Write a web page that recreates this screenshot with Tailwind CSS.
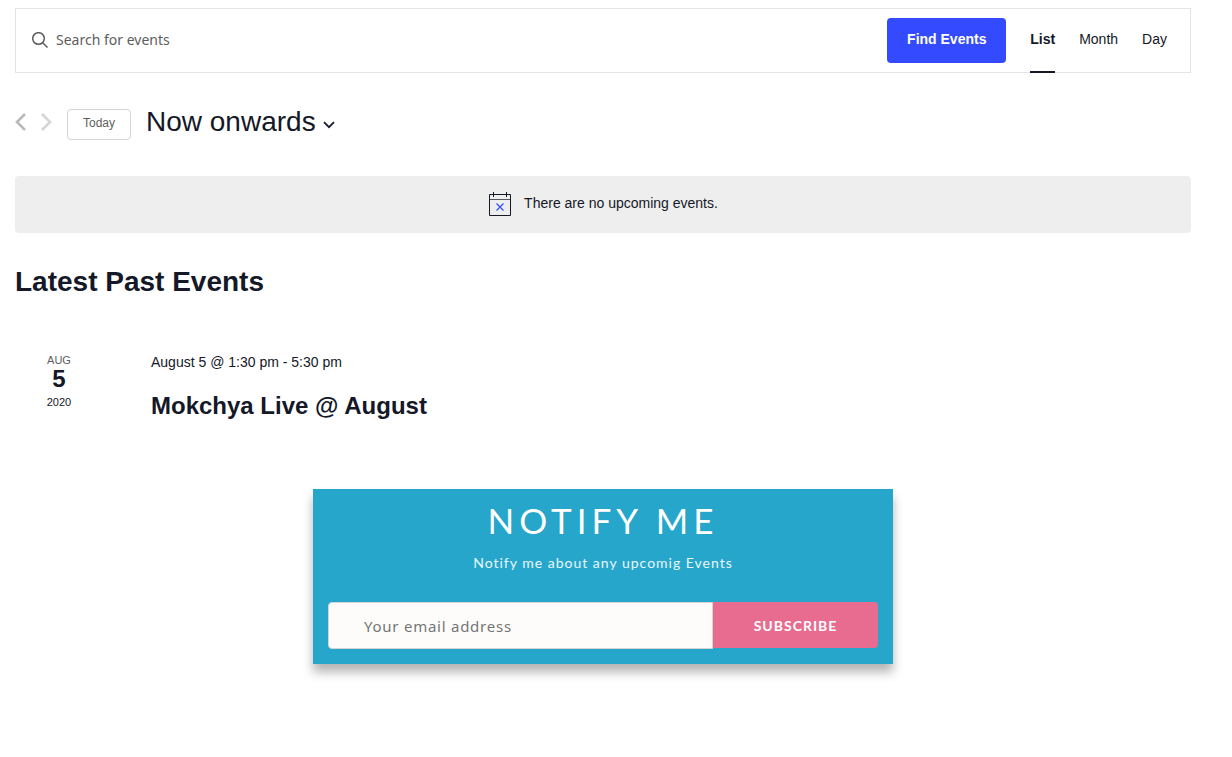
<!DOCTYPE html>
<html lang="en">
<head>
    <meta charset="UTF-8">
    <meta name="viewport" content="width=device-width, initial-scale=1.0">
    <title>Events</title>
    <script src="https://cdn.jsdelivr.net/npm/@tailwindcss/browser@4"></script>
</head>
<body class="bg-white text-[#141827] font-['Liberation_Sans',sans-serif]">
    <main class="pl-[15px] pr-[41px] pt-2 pb-10">

        <!-- Search bar and view switcher -->
        <header class="flex items-stretch border border-[#e4e4e4] h-[65px] pr-[23px]">
            <form class="flex flex-1 items-center pr-6" onsubmit="return false">
                <label for="search" class="pl-4 pr-2 pb-0.5" aria-label="Search for events">
                    <svg class="w-4 h-4" viewBox="0 0 16 16" fill="none" stroke="#5d5d5d" stroke-width="1.5">
                        <circle cx="6.5" cy="6.5" r="5.8"/>
                        <path d="M10.7 10.7L15.5 15.5"/>
                    </svg>
                </label>
                <input id="search" type="text" placeholder="Search for events" class="flex-1 min-w-0 h-11 pb-0.5 text-sm outline-none placeholder:text-[#5d5d5d] placeholder:opacity-100 font-['Noto_Sans',sans-serif]">
                <button type="submit" class="bg-[#334aff] text-white text-sm font-bold rounded h-[45px] w-[119px] pb-1">Find Events</button>
            </form>
            <nav class="flex gap-6 text-sm -mb-px">
                <a href="#" class="flex items-center pb-0.5 font-bold border-b-2 border-[#141827]">List</a>
                <a href="#" class="flex items-center pb-0.5 border-b-2 border-transparent">Month</a>
                <a href="#" class="flex items-center pb-0.5 border-b-2 border-transparent">Day</a>
            </nav>
        </header>

        <!-- Date navigation -->
        <div class="flex items-center mt-8 h-9">
            <button type="button" aria-label="Previous events" class="w-3 pb-0.5">
                <svg class="w-3 h-[18px]" viewBox="0 0 12 18" fill="none" stroke="#bababa" stroke-width="2.6">
                    <path d="M10 1L2 9l8 8"/>
                </svg>
            </button>
            <button type="button" aria-label="Next events" class="w-3 ml-[13px] pb-0.5" disabled>
                <svg class="w-3 h-[18px]" viewBox="0 0 12 18" fill="none" stroke="#d5d5d5" stroke-width="2.6">
                    <path d="M2 1l8 8l-8 8"/>
                </svg>
            </button>
            <button type="button" class="ml-[15px] mt-0.5 h-[31px] w-16 pb-0.5 border border-[#d5d5d5] rounded text-xs text-[#5d5d5d]">Today</button>
            <button type="button" class="flex items-center gap-[7px] ml-[15px] pb-0.5 text-[28px] leading-9">
                Now onwards
                <svg class="w-3 h-2 mt-1.5" viewBox="0 0 12 8" fill="none" stroke="#141827" stroke-width="1.7">
                    <path d="M1 1.2l5 5l5-5"/>
                </svg>
            </button>
        </div>

        <div class="flex items-center justify-center gap-3 mt-[35px] h-[57px] pb-0.5 rounded bg-[#eee] text-sm">
            <svg class="w-6 h-6" viewBox="0 0 24 24" fill="none" stroke="#141827">
                <path d="M1.5 2.5h21v21h-21z"/>
                <path d="M1 7.5h22" stroke-opacity="0.7"/>
                <path d="M5.5 0v5M18.5 0v5"/>
                <path d="M8.5 11.5l7 7M15.5 11.5l-7 7" stroke="#334aff" stroke-width="1.2"/>
            </svg>
            <p class="pb-0.5">There are no upcoming events.</p>
        </div>

        <h2 class="mt-[31px] text-[28px] leading-9 font-bold">Latest Past Events</h2>

        <article class="flex mt-[50px]">
            <time datetime="2020-08-05" class="flex flex-col items-center w-[88px] mr-12 pt-0.5 text-[11px] leading-4">
                <span class="text-[#5d5d5d]">AUG</span>
                <span class="text-2xl leading-[22px] font-bold">5</span>
                <span class="pt-1">2020</span>
            </time>
            <div>
                <p class="text-sm leading-6">August 5 @ 1:30 pm - 5:30 pm</p>
                <h3 class="mt-4 text-2xl leading-8 font-bold"><a href="#">Mokchya Live @ August</a></h3>
            </div>
        </article>

        <!-- Newsletter -->
        <section class="max-w-[580px] mx-auto mt-[67px] px-[15px] pt-3.5 pb-[15px] bg-[#26a6cb] text-white text-center shadow-[0_8px_10px_rgba(0,0,0,0.3)] font-['Lato',sans-serif]">
            <h2 class="text-[35px] leading-[34px] tracking-[5px]">NOTIFY ME</h2>
            <p class="mt-3.5 text-sm leading-6 tracking-[1px] text-white/90">Notify me about any upcomig Events</p>
            <form class="flex items-start mt-[27px]" onsubmit="return false">
                <input type="email" aria-label="Your email address" placeholder="Your email address" class="flex-1 min-w-0 h-[47px] px-[35px] bg-[#fefcfb] border border-[#d5d5d5] rounded-l text-[15px] tracking-wider text-[#333] outline-none placeholder:text-[#757575] font-['Noto_Sans',sans-serif]">
                <button type="submit" class="w-[165px] h-[46px] pt-0.5 bg-[#e86c8f] rounded-r text-sm font-bold tracking-[1px]">SUBSCRIBE</button>
            </form>
        </section>
    </main>
</body>
</html>
